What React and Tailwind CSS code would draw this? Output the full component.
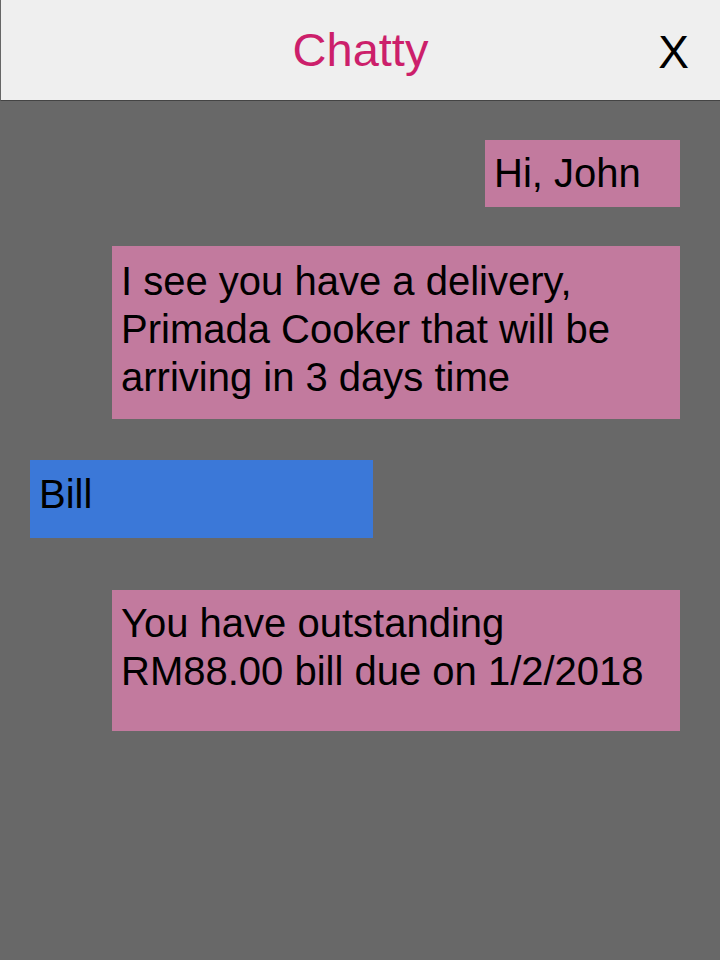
export default function App() {
  return (
    <div className="w-[720px] h-[960px] bg-[#686868] flex flex-col font-['Liberation_Sans',Arial,sans-serif] text-black">
      {/* Header */}
      <header className="h-[101px] shrink-0 bg-[#efefef] border-l border-l-[#666] border-b border-b-[#444] grid grid-cols-[1fr_auto_1fr] items-center">
        <div />
        <h1 className="text-[47px] text-[#cc1f6b]">Chatty</h1>
        <div className="flex justify-end pr-[31px] pt-1">
          <button className="text-[46px] leading-none">X</button>
        </div>
      </header>

      {/* Messages */}
      <main className="flex flex-col px-10 text-[40px] leading-[48px]">
        <div className="self-end mt-[39px] w-[195px] h-[67px] bg-[#c27a9e] pl-[9px] pt-[9px]">
          Hi, John
        </div>
        <div className="self-end mt-[39px] w-[568px] h-[173px] bg-[#c27a9e] pl-[9px] pr-[30px] pt-[11px]">
          I see you have a delivery, Primada Cooker that will be arriving in 3 days time
        </div>
        <div className="self-start -ml-[10px] mt-[41px] w-[343px] h-[78px] bg-[#3b78d8] pl-[9px] pt-[10px]">
          Bill
        </div>
        <div className="self-end mt-[52px] w-[568px] h-[141px] bg-[#c27a9e] pl-[9px] pr-[30px] pt-[9px]">
          You have outstanding RM88.00 bill due on 1/2/2018
        </div>
      </main>
    </div>
  )
}
